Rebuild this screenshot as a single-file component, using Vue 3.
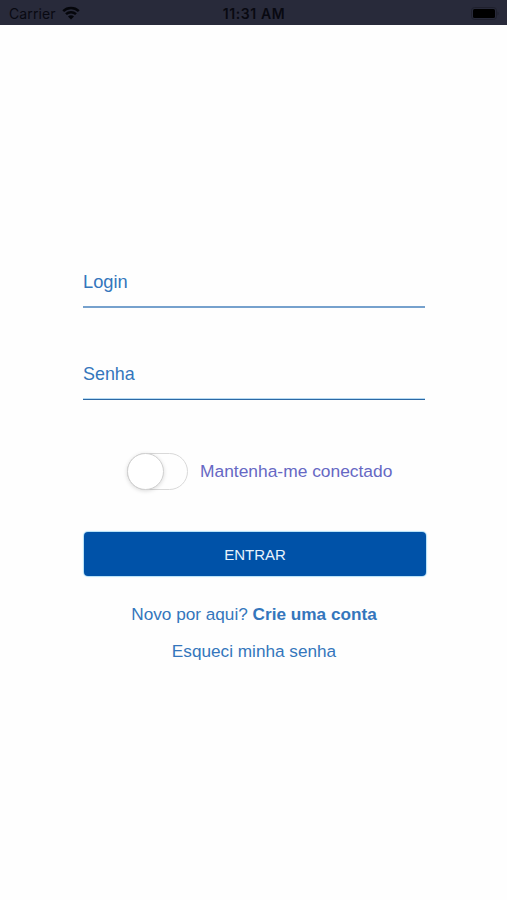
<template>
  <div class="screen">
    <header class="status">
      <div class="status__left">
        <span class="status__carrier">Carrier</span>
        <svg class="status__wifi" viewBox="0 0 18 14" width="18" height="14">
          <path d="M1.2 5.2C5.6 1 12.4 1 16.8 5.2" />
          <path d="M4 8.2c2.8-2.6 7.2-2.6 10 0" />
          <path class="status__dot" d="M6 10.4c1.7-1.5 4.3-1.5 6 0L9 13.5z" />
        </svg>
      </div>
      <span class="status__time">11:31 AM</span>
      <svg class="status__battery" viewBox="0 0 28 13" width="28" height="13">
        <rect class="status__case" x="0.5" y="0.5" width="25" height="12" rx="3" />
        <rect x="2" y="2" width="22" height="9" rx="1.5" />
        <path class="status__tip" d="M26.5 4.5c1.5.5 1.5 3.5 0 4z" />
      </svg>
    </header>

    <form class="login" @submit.prevent>
      <label class="login__field">
        <span v-show="!user" class="login__label">Login</span>
        <input v-model="user" type="text">
      </label>
      <label class="login__field login__field--password">
        <span v-show="!password" class="login__label">Senha</span>
        <input v-model="password" type="password">
      </label>

      <label class="login__keep">
        <input v-model="keepConnected" type="checkbox">
        <span class="switch" :class="{ 'switch--on': keepConnected }">
          <span class="switch__thumb"></span>
        </span>
        <span class="login__keep-text">Mantenha-me conectado</span>
      </label>

      <button class="login__button" type="submit">ENTRAR</button>

      <a class="login__link">Novo por aqui? <b>Crie uma conta</b></a>
      <a class="login__link login__link--forgot">Esqueci minha senha</a>
    </form>
  </div>
</template>

<script setup>
import { ref } from 'vue';

  const user = ref('')
  const password = ref('')
  const keepConnected = ref(false)
</script>

<style>
  body{
    margin: 0;
    background: #fff;
  }
</style>

<style scoped>
  .screen{
    height: 900px;
    overflow: hidden;
    background: #fefefe;
    font-family: "Liberation Sans", Arial, sans-serif;
    color: #3476bc;
  }

  .status{
    box-sizing: border-box;
    height: 25px;
    padding: 2px 8px 0 9px;
    display: grid;
    grid-template-columns: 1fr auto 1fr;
    align-items: center;
    background: #282a3a;
    color: #080911;
    font-family: Inter, sans-serif;
  }

  .status__left{
    display: flex;
    align-items: center;
    gap: 6px;
  }

  .status__carrier{
    font-size: 14px;
    letter-spacing: 0.1px;
  }

  .status__wifi{
    margin-top: -2px;
    fill: none;
    stroke: #05060b;
    stroke-width: 2.5;
  }

  .status__dot{
    fill: #05060b;
    stroke: none;
  }

  .status__time{
    font-size: 14px;
    font-weight: 600;
    letter-spacing: 0.6px;
  }

  .status__battery{
    justify-self: end;
    fill: #000;
  }

  .status__case{
    fill: none;
    stroke: #1f202d;
  }

  .status__tip{
    fill: #1f202d;
  }

  .login{
    width: 342px;
    margin-left: 83px;
    padding-top: 239px;
    display: flex;
    flex-direction: column;
  }

  .login__field{
    box-sizing: border-box;
    height: 44px;
    display: flex;
    align-items: flex-start;
    padding-top: 6px;
    border-bottom: 2px solid #76a1cd;
  }

  .login__field--password{
    height: 43px;
    margin-top: 49px;
    padding-top: 5px;
    border-bottom: 1px solid #2c68a4;
    box-shadow: inset 0 -1px #b5daf3;
  }

  .login__label{
    font-size: 18.3px;
    line-height: 24px;
  }

  .login__field--password .login__label{
    font-size: 17.9px;
  }

  .login__field input{
    flex: 1;
    min-width: 0;
    height: 24px;
    padding: 0;
    border: 0;
    outline: 0;
    background: transparent;
    color: inherit;
    font: inherit;
    font-size: 18px;
  }

  .login__keep{
    height: 37px;
    margin: 53px 0 0 44px;
    display: flex;
    align-items: center;
    color: #6668c4;
    white-space: nowrap;
  }

  .login__keep input{
    display: none;
  }

  .login__keep-text{
    margin-left: 12px;
    font-size: 17.4px;
  }

  .switch{
    box-sizing: border-box;
    width: 61px;
    height: 37px;
    display: flex;
    border: 1px solid #d9d9d9;
    border-radius: 19px;
  }

  .switch--on{
    justify-content: flex-end;
    background: #0052a8;
  }

  .switch__thumb{
    box-sizing: border-box;
    width: 37px;
    height: 37px;
    margin: -1px;
    border: 1px solid #d0d0d0;
    border-radius: 50%;
    background: #fff;
    box-shadow: 0 1px 4px rgba(0, 0, 0, 0.15);
  }

  .login__button{
    width: 342px;
    height: 44px;
    margin: 42px 0 0 1px;
    padding: 0;
    border: 0;
    border-radius: 4px;
    background: #0052a8;
    box-shadow: 0 0 1px 1px #b3e0f8;
    color: #e8f3fc;
    font: 15px "Liberation Sans", Arial, sans-serif;
  }

  .login__link{
    margin-top: 27px;
    font-size: 17.2px;
    line-height: 22px;
    text-align: center;
    white-space: nowrap;
  }

  .login__link--forgot{
    margin-top: 15px;
  }
</style>
